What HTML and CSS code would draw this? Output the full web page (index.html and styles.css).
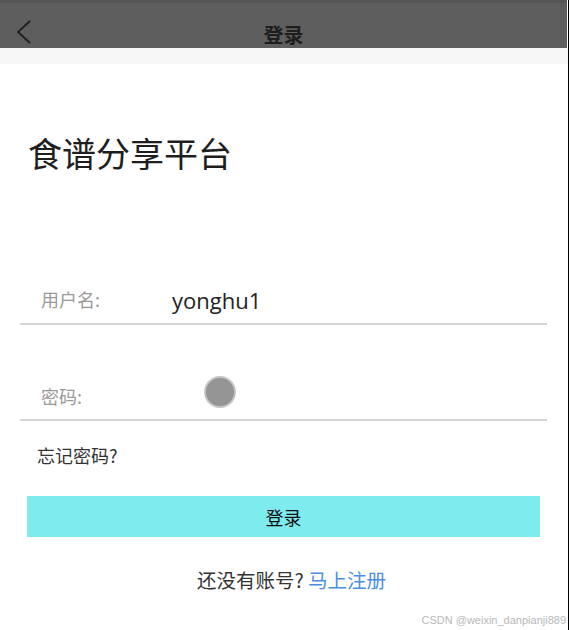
FILE: index.html
```html
<!DOCTYPE html>
<html lang="zh-CN">
<head>
    <meta charset="UTF-8">
    <meta name="viewport" content="width=device-width, initial-scale=1.0">
    <title>登录</title>
    <link rel="stylesheet" href="styles.css">
</head>
<body>
    <div class="topbar">
        <span class="back">
            <svg width="16" height="24" viewBox="0 0 16 24"><polyline points="14,1 2,12 14,23" fill="none" stroke="#1e1e1e" stroke-width="1.8"/></svg>
        </span>
        <span class="topbar-title">登录</span>
    </div>
    <div class="strip"></div>

    <div class="main">
        <h1 class="app-title">食谱分享平台</h1>

        <div class="field field-user">
            <span class="field-label">用户名:</span>
            <span class="field-value">yonghu1</span>
        </div>
        <div class="field field-pass">
            <span class="field-label">密码:</span>
            <span class="dot"></span>
        </div>

        <div class="forgot">忘记密码?</div>

        <button class="login-btn">登录</button>

        <div class="register">还没有账号? <a href="#">马上注册</a></div>
    </div>

    <div class="watermark">CSDN @weixin_danpianji889</div>
</body>
</html>
```

FILE: styles.css
```css
body {
    margin: 0;
    width: 568px;
    height: 630px;
    border-right: 1px solid #000;
    background-color: #fff;
    font-family: "Noto Sans CJK SC", "Noto Sans", sans-serif;
    position: relative;
    overflow: hidden;
}
.topbar {
    height: 48px;
    box-sizing: border-box;
    border-top: 3px solid #565656;
    background-color: #5e5e5e;
    position: relative;
    display: flex;
    justify-content: center;
    align-items: flex-end;
    margin-right: 1px;
}
.back {
    position: absolute;
    left: 16px;
    top: 17px;
}
.topbar-title {
    font-size: 20px;
    line-height: 24px;
    font-weight: bold;
    color: #1e1e1e;
    margin-bottom: 1px;
}
.strip {
    height: 16px;
    background-color: #f7f7f7;
}
.main {
    padding: 0 21px 0 20px;
}
.app-title {
    margin: 69px 0 0 8px;
    font-size: 34px;
    line-height: 40px;
    font-weight: normal;
    color: #1e1e1e;
}
.field {
    height: 46px;
    display: flex;
    align-items: center;
    border-bottom: 2px solid #d6d6d6;
}
.field-user {
    margin-top: 104px;
}
.field-pass {
    margin-top: 48px;
}
.field-label {
    flex: none;
    width: 131px;
    padding-left: 21px;
    font-size: 18px;
    color: #9a9a9a;
}
.field-user .field-label {
    padding-bottom: 3px;
}
.field-value {
    font-family: "Open Sans", "Noto Sans", sans-serif;
    font-size: 22px;
    color: #222;
}
.dot {
    flex: none;
    width: 28px;
    height: 28px;
    margin-left: 32px;
    margin-bottom: 8px;
    border-radius: 50%;
    background-color: #959595;
    border: 2px solid #c4c4c4;
}
.forgot {
    margin: 22px 0 0 17px;
    font-size: 18px;
    line-height: 24px;
    color: #333;
}
.login-btn {
    display: block;
    margin: 29px 0 0 7px;
    width: 513px;
    height: 41px;
    border: none;
    background-color: #7eebee;
    font-family: inherit;
    font-size: 18px;
    color: #111;
}
.register {
    margin: 30px 0 0 16px;
    text-align: center;
    font-size: 19.5px;
    line-height: 26px;
    color: #333;
}
.register a {
    color: #4a8fe0;
    text-decoration: none;
}
.watermark {
    position: absolute;
    right: 2px;
    bottom: 4px;
    font-family: "Liberation Sans", sans-serif;
    font-size: 11px;
    color: #b8b8b8;
}
```
